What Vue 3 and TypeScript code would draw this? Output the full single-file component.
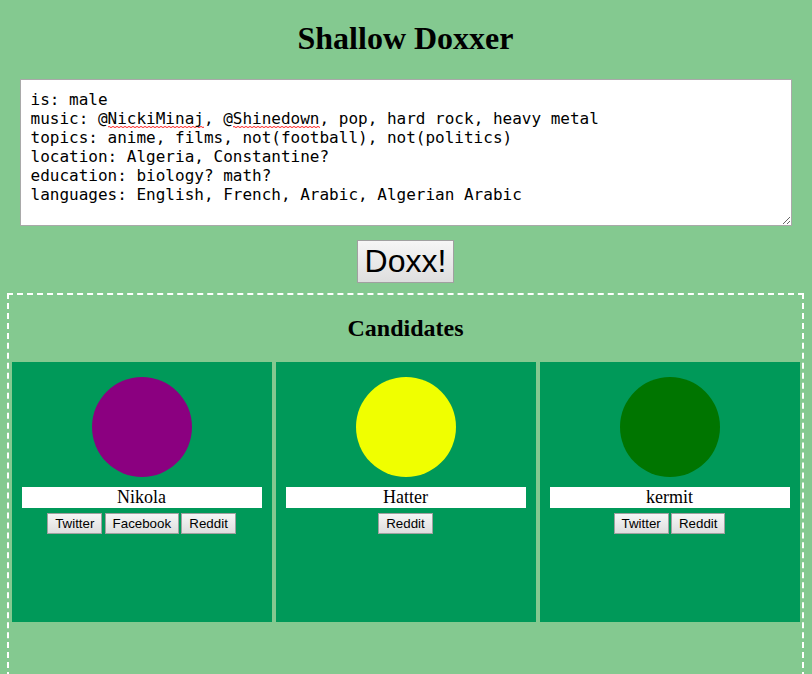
<script setup lang="ts">
interface Candidate {
  name: string
  tone: string
  networks: string[]
}

interface Token {
  text: string
  flagged?: boolean
}

const query: Token[][] = [
  [{ text: 'is: male' }],
  [
    { text: 'music: @' },
    { text: 'NickiMinaj', flagged: true },
    { text: ', @' },
    { text: 'Shinedown', flagged: true },
    { text: ', pop, hard rock, heavy metal' },
  ],
  [{ text: 'topics: anime, films, not(football), not(politics)' }],
  [{ text: 'location: Algeria, Constantine?' }],
  [{ text: 'education: biology? math?' }],
  [{ text: 'languages: English, French, Arabic, Algerian Arabic' }],
]

const candidates: Candidate[] = [
  { name: 'Nikola', tone: 'purple', networks: ['Twitter', 'Facebook', 'Reddit'] },
  { name: 'Hatter', tone: 'yellow', networks: ['Reddit'] },
  { name: 'kermit', tone: 'green', networks: ['Twitter', 'Reddit'] },
]
</script>

<template>
  <main class="page">
    <h1>Shallow Doxxer</h1>
    <div class="query" role="textbox" aria-multiline="true" tabindex="0">
      <div v-for="(line, i) in query" :key="i" class="line"><span v-for="(token, j) in line" :key="j" :class="{ flagged: token.flagged }">{{ token.text }}</span></div>
    </div>
    <button class="btn doxx" type="button">Doxx!</button>
    <section class="panel">
      <h2>Candidates</h2>
      <div class="cards">
        <article v-for="c in candidates" :key="c.name" class="card">
          <div class="avatar" :class="c.tone"></div>
          <div class="name">{{ c.name }}</div>
          <div class="links">
            <button v-for="n in c.networks" :key="n" class="btn" type="button">{{ n }}</button>
          </div>
        </article>
      </div>
    </section>
  </main>
</template>

<style>
body {
  background: #84c990;
}
</style>

<style scoped>
.page {
  box-sizing: border-box;
  height: 674px;
  overflow: hidden;
  display: flex;
  flex-direction: column;
  align-items: center;
  padding: 20px 8px 0 7px;
  background: #84c990;
  color: #000;
  font-family: "Liberation Serif", serif;
}
h1 {
  margin: 0;
  font-size: 32px;
  line-height: 36px;
}
.query {
  box-sizing: border-box;
  flex: none;
  width: 772px;
  height: 147px;
  margin: 23px 0 0 1px;
  padding: 10px 9.5px;
  border: 1px solid #a9a9a9;
  background: #fff;
  font: 16px/19px "DejaVu Sans Mono", monospace;
  overflow: auto;
  resize: both;
}
.line {
  white-space: pre;
}
/* two offset rows of 2px dashes form the spell-check squiggle */
.flagged {
  background-image:
    linear-gradient(90deg, #ff5050 50%, #ffd0d0 50%),
    linear-gradient(90deg, #ffd0d0 50%, #ff5050 50%);
  background-size: 4px 1px;
  background-repeat: repeat-x;
  background-position: 0 calc(100% - 1px), 0 100%;
}
.btn {
  box-sizing: border-box;
  height: 21px;
  margin: 0;
  padding: 0 7px;
  border: 1px solid #a0a0a0;
  border-radius: 0;
  background: linear-gradient(#f6f6f6, #dedede);
  color: #000;
  font: 13.333px/17px "Liberation Sans", sans-serif;
}
.doxx {
  flex: none;
  height: 43px;
  margin-top: 14px;
  padding: 0 6.5px;
  font-size: 32px;
  line-height: 37px;
}
.panel {
  box-sizing: border-box;
  flex: none;
  width: 797px;
  height: 395px;
  margin-top: 10px;
  padding: 19px 3px 0;
  border: 2px dashed #fff;
}
h2 {
  margin: 0;
  text-align: center;
  font-size: 24px;
  line-height: 28px;
}
.cards {
  display: flex;
  gap: 4px;
  margin-top: 20px;
}
.card {
  box-sizing: border-box;
  flex: none;
  width: 260px;
  height: 260px;
  padding: 15px 10px 0;
  background: #009959;
}
.avatar {
  width: 100px;
  height: 100px;
  margin: 0 auto;
  border-radius: 50%;
}
.purple {
  background: #8b0080;
}
.yellow {
  background: #f0ff00;
}
.green {
  background: #007500;
}
.name {
  margin-top: 10px;
  padding-right: 1px;
  background: #fff;
  text-align: center;
  font-size: 18px;
  line-height: 21px;
}
.links {
  display: flex;
  justify-content: center;
  gap: 2.2px;
  margin-top: 5px;
  padding-right: 1px;
}
</style>
